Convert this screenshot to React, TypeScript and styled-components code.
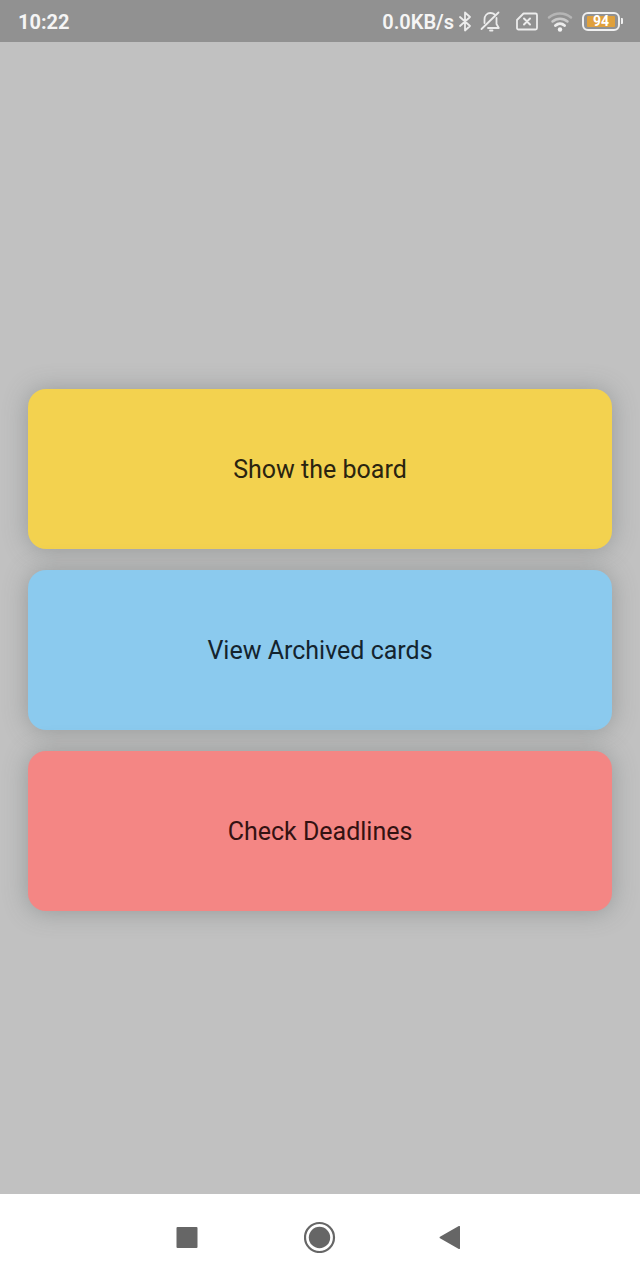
import React from "react";
import styled, { createGlobalStyle } from "styled-components";

const GlobalStyle = createGlobalStyle`
  *, *::before, *::after { box-sizing: border-box; }
  body { margin: 0; font-family: Roboto, "Liberation Sans", sans-serif; }
`;

const Screen = styled.div`
  display: flex;
  flex-direction: column;
  min-height: 100vh;
  background: #c1c1c1;
`;

const StatusBar = styled.header`
  display: flex;
  align-items: center;
  justify-content: space-between;
  height: 42px;
  padding: 2px 17px 0 18px;
  background: #919191;
  color: #f5f5f5;
  font-size: 20px;
  font-weight: 700;
  line-height: 24px;
`;

const StatusGroup = styled.div`
  display: flex;
  align-items: center;
`;

const NetworkSpeed = styled.span`
  font-weight: 600;
`;

const StatusIcon = styled.svg<{ $gap: number }>`
  display: block;
  height: 24px;
  margin-left: ${({ $gap }) => $gap}px;
  margin-bottom: 2px;
  fill: none;
  stroke: #ececec;
  stroke-width: 1.8;
  stroke-linecap: round;
  stroke-linejoin: round;
`;

const Battery = styled.div`
  display: flex;
  align-items: center;
  margin: 0 0 2px 9px;
`;

const BatteryCase = styled.div`
  width: 38px;
  height: 19px;
  padding: 2px 3px;
  border: 2px solid #f0f0f0;
  border-radius: 6px;
`;

const BatteryLevel = styled.div`
  height: 11px;
  border-radius: 1px;
  background: #dfa03c;
  color: #ffffff;
  font-size: 14px;
  line-height: 11px;
  text-align: center;
`;

const BatteryTip = styled.div`
  width: 2px;
  height: 6px;
  margin-left: 1px;
  border-radius: 0 1px 1px 0;
  background: #f0f0f0;
`;

const Main = styled.main`
  display: flex;
  flex: 1;
  flex-direction: column;
  justify-content: center;
  gap: 21px;
  padding: 64px 28px 0;
`;

const MenuCard = styled.button<{ $color: string; $ink: string }>`
  width: 100%;
  height: 160px;
  padding: 2px 16px 0;
  border: 0;
  border-radius: 18px;
  background: ${({ $color }) => $color};
  box-shadow: 0 1px 24px rgba(90, 98, 98, 0.42);
  color: ${({ $ink }) => $ink};
  font-family: inherit;
  font-size: 25px;
  line-height: 30px;
  cursor: pointer;
`;

const NavBar = styled.nav`
  display: flex;
  align-items: center;
  justify-content: center;
  gap: 99px;
  height: 86px;
  background: #ffffff;
`;

const NavButton = styled.button`
  display: flex;
  width: 32px;
  height: 32px;
  padding: 0;
  border: 0;
  background: transparent;
  color: #666666;
  cursor: pointer;
`;

const cards = [
  { label: "Show the board", color: "#f3d24f", ink: "#2a2410" },
  { label: "View Archived cards", color: "#8bcaee", ink: "#14242e" },
  { label: "Check Deadlines", color: "#f48684", ink: "#331212" },
];

export default function App() {
  return (
    <Screen>
      <GlobalStyle />
      <StatusBar>
        <time>10:22</time>
        <StatusGroup>
          <NetworkSpeed>0.0KB/s</NetworkSpeed>
          <StatusIcon $gap={4} width="14" viewBox="0 0 14 24" aria-hidden="true">
            <path d="M2 8 12 17 7 21.500V3.500L12 8 2 17" />
          </StatusIcon>
          <StatusIcon $gap={8} width="22" viewBox="0 0 22 24" aria-hidden="true">
            <path d="M4.500 14V10.500c0-4 2.500-6.500 6-6.500 1.700 0 3.100.5 4.200 1.500M16.500 9v6l2.300 4H8" />
            <path d="M1.500 20 18.500 3.500M10 21.500h2.500" />
          </StatusIcon>
          <StatusIcon $gap={14} width="22" viewBox="0 0 22 24" aria-hidden="true">
            <path d="M7.500 4.500h12a1.500 1.500 0 0 1 1.500 1.500v13a1.500 1.500 0 0 1-1.500 1.500h-17A1.500 1.500 0 0 1 1 19v-8z" />
            <path d="m8 9.500 6 6m0-6-6 6" strokeWidth="2" />
          </StatusIcon>
          <StatusIcon $gap={9} width="26" viewBox="0 0 26 24" aria-hidden="true">
            <path d="M2 8.500c6.300-5.400 15.700-5.400 22 0" stroke="#b5b5b5" strokeWidth="2.500" />
            <path d="M5.500 12.500c4.300-3.800 10.700-3.800 15 0" stroke="#c9c9c9" strokeWidth="2.500" />
            <path d="M8.500 16.500c2.600-2.400 6.400-2.400 9 0" strokeWidth="3" />
            <circle cx="13" cy="20.500" r="2.200" fill="#f5f5f5" stroke="none" />
          </StatusIcon>
          <Battery>
            <BatteryCase>
              <BatteryLevel>94</BatteryLevel>
            </BatteryCase>
            <BatteryTip />
          </Battery>
        </StatusGroup>
      </StatusBar>
      <Main>
        {cards.map((card) => (
          <MenuCard key={card.label} type="button" $color={card.color} $ink={card.ink}>
            {card.label}
          </MenuCard>
        ))}
      </Main>
      <NavBar aria-label="System navigation">
        <NavButton type="button" aria-label="Recent apps">
          <svg width="32" height="32" viewBox="0 0 32 32" fill="currentColor">
            <rect x="3.500" y="6" width="21" height="21" rx="1" />
          </svg>
        </NavButton>
        <NavButton type="button" aria-label="Home">
          <svg width="32" height="32" viewBox="0 0 32 32" fill="currentColor">
            <circle cx="15.500" cy="16.500" r="10.700" />
            <circle cx="15.500" cy="16.500" r="14.500" fill="none" stroke="currentColor" strokeWidth="2.200" />
          </svg>
        </NavButton>
        <NavButton type="button" aria-label="Back">
          <svg width="32" height="32" viewBox="0 0 32 32" fill="currentColor">
            <path d="M25 5.800v21.400a.8.8 0 0 1-1.200.7L5 17.200a.8.8 0 0 1 0-1.400L23.800 5.100A.8.8 0 0 1 25 5.800z" />
          </svg>
        </NavButton>
      </NavBar>
    </Screen>
  );
}
